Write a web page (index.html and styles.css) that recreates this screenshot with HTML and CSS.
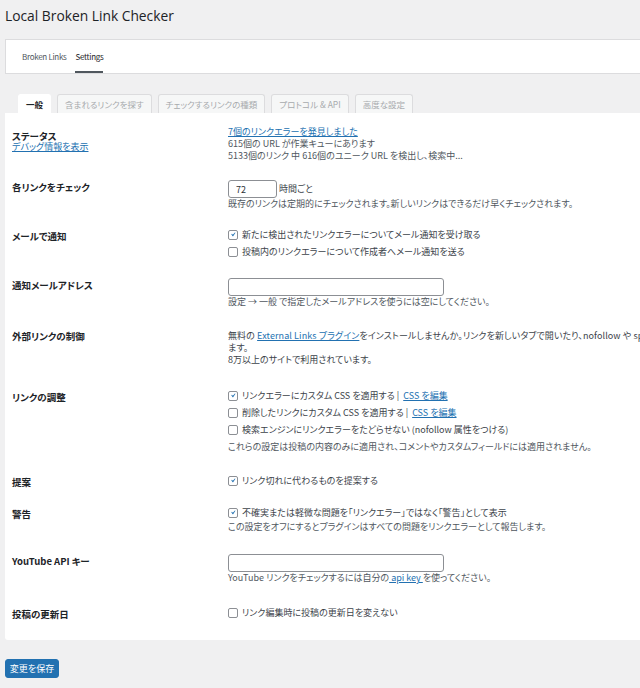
FILE: index.html
```html
<!DOCTYPE html>
<html lang="ja">
<head>
<meta charset="utf-8">
<title>Local Broken Link Checker</title>
<link rel="stylesheet" href="styles.css">
</head>
<body>
<div class="wrap">
  <h1 class="title">Local Broken Link Checker</h1>
  <nav class="subnav">
    <a href="#">Broken Links</a>
    <a href="#" class="current">Settings</a>
  </nav>
  <div class="tabs">
    <span class="tab active">一般</span>
    <span class="tab">含まれるリンクを探す</span>
    <span class="tab">チェックするリンクの種類</span>
    <span class="tab">プロトコル &amp; API</span>
    <span class="tab">高度な設定</span>
  </div>
  <form class="panel">
    <div class="row">
      <div class="label">ステータス<a href="#">デバッグ情報を表示</a></div>
      <div class="value">
        <a href="#">7個のリンクエラーを発見しました</a>
        <p class="muted">615個の URL が作業キューにあります</p>
        <p class="muted">5133個のリンク 中 616個のユニーク URL を検出し、検索中...</p>
      </div>
    </div>
    <div class="row">
      <div class="label">各リンクをチェック</div>
      <div class="value with-input">
        <div class="field"><input class="input" type="text" value="72"><span>時間ごと</span></div>
        <p class="desc tight">既存のリンクは定期的にチェックされます。新しいリンクはできるだけ早くチェックされます。</p>
      </div>
    </div>
    <div class="row">
      <div class="label">メールで通知</div>
      <div class="value">
        <label class="check"><span class="box on"><svg viewBox="0 0 20 20"><path d="M14.83 4.89l1.34.94-5.81 8.38H9.02L5.78 9.67l1.34-1.25 2.57 2.4z"/></svg></span>新たに検出されたリンクエラーについてメール通知を受け取る</label>
        <label class="check"><span class="box"></span>投稿内のリンクエラーについて作成者へメール通知を送る</label>
      </div>
    </div>
    <div class="row">
      <div class="label">通知メールアドレス</div>
      <div class="value with-input">
        <input class="input wide" type="text" value="">
        <p class="desc">設定 → 一般 で指定したメールアドレスを使うには空にしてください。</p>
      </div>
    </div>
    <div class="row">
      <div class="label">外部リンクの制御</div>
      <div class="value with-text">
        <p class="nowrap">無料の <a href="#">External Links プラグイン</a>をインストールしませんか。リンクを新しいタブで開いたり、nofollow や sponsored 属性を追加したりでき<br>ます。</p>
        <p>8万以上のサイトで利用されています。</p>
      </div>
    </div>
    <div class="row">
      <div class="label">リンクの調整</div>
      <div class="value">
        <label class="check"><span class="box on"><svg viewBox="0 0 20 20"><path d="M14.83 4.89l1.34.94-5.81 8.38H9.02L5.78 9.67l1.34-1.25 2.57 2.4z"/></svg></span>リンクエラーにカスタム CSS を適用する | <a href="#">CSS を編集</a></label>
        <label class="check"><span class="box"></span>削除したリンクにカスタム CSS を適用する | <a href="#">CSS を編集</a></label>
        <label class="check"><span class="box"></span>検索エンジンにリンクエラーをたどらせない (nofollow 属性をつける)</label>
        <p class="desc spaced">これらの設定は投稿の内容のみに適用され、コメントやカスタムフィールドには適用されません。</p>
      </div>
    </div>
    <div class="row">
      <div class="label">提案</div>
      <div class="value">
        <label class="check"><span class="box on"><svg viewBox="0 0 20 20"><path d="M14.83 4.89l1.34.94-5.81 8.38H9.02L5.78 9.67l1.34-1.25 2.57 2.4z"/></svg></span>リンク切れに代わるものを提案する</label>
      </div>
    </div>
    <div class="row">
      <div class="label">警告</div>
      <div class="value">
        <label class="check"><span class="box on"><svg viewBox="0 0 20 20"><path d="M14.83 4.89l1.34.94-5.81 8.38H9.02L5.78 9.67l1.34-1.25 2.57 2.4z"/></svg></span>不確実または軽微な問題を「リンクエラー」ではなく「警告」として表示</label>
        <p class="desc">この設定をオフにするとプラグインはすべての問題をリンクエラーとして報告します。</p>
      </div>
    </div>
    <div class="row">
      <div class="label">YouTube API キー</div>
      <div class="value with-input">
        <input class="input wide" type="text" value="">
        <p class="desc loose">YouTube リンクをチェックするには自分の<a href="#"> api key </a>を使ってください。</p>
      </div>
    </div>
    <div class="row">
      <div class="label">投稿の更新日</div>
      <div class="value">
        <label class="check"><span class="box"></span>リンク編集時に投稿の更新日を変えない</label>
      </div>
    </div>
  </form>
  <button class="save" type="button">変更を保存</button>
</div>
</body>
</html>
```
FILE: styles.css
```css
html, body {
  margin: 0;
  padding: 0;
  overflow: hidden;
  background: #f0f0f1;
}
body {
  font-family: "Noto Sans CJK JP", "Noto Sans", sans-serif;
  font-size: 9px;
  line-height: 12px;
  color: #3c434a;
  font-feature-settings: "palt";
}
.wrap {
  width: 1000px;
  padding: 8px 0 0 5px;
}
.title {
  margin: 0;
  font-family: "Open Sans", "Noto Sans", sans-serif;
  font-size: 13.8px;
  line-height: 16px;
  font-weight: 400;
  color: #1d2327;
}
.subnav {
  margin-top: 15px;
  height: 33px;
  display: flex;
  gap: 9px;
  padding-left: 16px;
  background: #fff;
  border: 1px solid #dcdcde;
  border-right: none;
}
.subnav a {
  display: flex;
  align-items: center;
  font-size: 8px;
  letter-spacing: -0.3px;
  color: #50575e;
  text-decoration: none;
}
.subnav a.current {
  color: #1d2327;
  box-shadow: inset 0 -2px 0 #50575e;
}
.tabs {
  display: flex;
  gap: 6px;
  margin: 20px 0 0 13px;
}
.tab {
  height: 19px;
  box-sizing: border-box;
  padding: 0 7px;
  display: flex;
  align-items: center;
  font-size: 8.5px;
  border: 1px solid #dcdcde;
  border-bottom: none;
  border-radius: 3px 3px 0 0;
  background: #f6f7f7;
  color: #a7aaad;
}
.tab.active {
  background: #fff;
  border-color: #fff;
  color: #1d2327;
  font-weight: 700;
}
.panel {
  margin: 0;
  background: #fff;
  padding: 13px 0 19px 7px;
  display: flex;
  flex-direction: column;
  gap: 15px;
  border-radius: 0 0 0 3px;
}
.row {
  display: grid;
  grid-template-columns: 216px 1fr;
  align-items: start;
}
.label {
  padding-top: 4px;
  font-size: 9.5px;
  font-weight: 700;
  color: #1d2327;
}
.label a {
  display: block;
  margin-top: -1px;
  font-size: 9px;
  font-weight: 400;
}
a {
  color: #2271b1;
}
.value p {
  margin: 0;
}
.muted {
  color: #50575e;
}
.with-input {
  padding-top: 3px;
}
.with-text {
  padding: 4px 0 6px;
}
.nowrap {
  white-space: nowrap;
  letter-spacing: 0.1px;
}
.field {
  display: flex;
  align-items: center;
  gap: 2px;
}
.input {
  display: block;
  width: 49px;
  height: 18px;
  box-sizing: border-box;
  margin: 0;
  padding: 0 7px;
  border: 1px solid #8c8f94;
  border-radius: 3px;
  background: #fff;
  font: inherit;
  color: #2c3338;
}
.input.wide {
  width: 216px;
}
.value .desc {
  color: #50575e;
  margin: 0 0 3px;
}
.value .desc.tight {
  margin-bottom: 1px;
}
.value .desc.spaced {
  margin: 3px 0 4px;
}
.value .desc.loose {
  margin-bottom: 5px;
}
.check {
  display: flex;
  align-items: center;
  gap: 4px;
  height: 17px;
  color: #3c434a;
}
.box {
  width: 10px;
  height: 10px;
  box-sizing: border-box;
  flex: none;
  border: 1px solid #8c8f94;
  border-radius: 2px;
  background: #fff;
  display: flex;
  align-items: center;
  justify-content: center;
}
.box svg {
  width: 11px;
  height: 11px;
  fill: #2271b1;
}
.save {
  display: block;
  margin-top: 19px;
  width: 54px;
  height: 19px;
  padding: 0;
  background: #2271b1;
  border: 1px solid #2271b1;
  border-radius: 3px;
  color: #fff;
  font: inherit;
}
```
